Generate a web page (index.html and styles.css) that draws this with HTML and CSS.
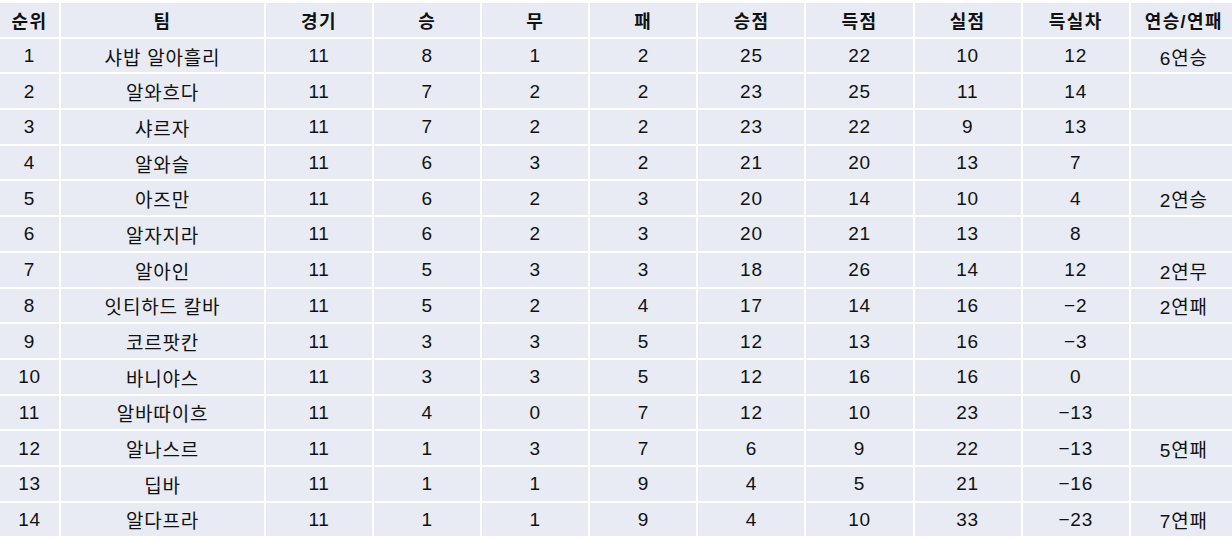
FILE: index.html
```html
<!DOCTYPE html>
<html lang="ko">
<head>
<meta charset="utf-8">
<title>순위표</title>
<link rel="stylesheet" href="styles.css">
</head>
<body>
<div class="standings">
  <div class="cell head">순위</div><div class="cell head">팀</div><div class="cell head">경기</div><div class="cell head">승</div><div class="cell head">무</div><div class="cell head">패</div><div class="cell head">승점</div><div class="cell head">득점</div><div class="cell head">실점</div><div class="cell head">득실차</div><div class="cell head">연승/연패</div>

  <div class="cell">1</div><div class="cell">샤밥 알아흘리</div><div class="cell">11</div><div class="cell">8</div><div class="cell">1</div><div class="cell">2</div><div class="cell">25</div><div class="cell">22</div><div class="cell">10</div><div class="cell">12</div><div class="cell">6연승</div>
  <div class="cell">2</div><div class="cell">알와흐다</div><div class="cell">11</div><div class="cell">7</div><div class="cell">2</div><div class="cell">2</div><div class="cell">23</div><div class="cell">25</div><div class="cell">11</div><div class="cell">14</div><div class="cell"></div>
  <div class="cell">3</div><div class="cell">샤르자</div><div class="cell">11</div><div class="cell">7</div><div class="cell">2</div><div class="cell">2</div><div class="cell">23</div><div class="cell">22</div><div class="cell">9</div><div class="cell">13</div><div class="cell"></div>
  <div class="cell">4</div><div class="cell">알와슬</div><div class="cell">11</div><div class="cell">6</div><div class="cell">3</div><div class="cell">2</div><div class="cell">21</div><div class="cell">20</div><div class="cell">13</div><div class="cell">7</div><div class="cell"></div>
  <div class="cell">5</div><div class="cell">아즈만</div><div class="cell">11</div><div class="cell">6</div><div class="cell">2</div><div class="cell">3</div><div class="cell">20</div><div class="cell">14</div><div class="cell">10</div><div class="cell">4</div><div class="cell">2연승</div>
  <div class="cell">6</div><div class="cell">알자지라</div><div class="cell">11</div><div class="cell">6</div><div class="cell">2</div><div class="cell">3</div><div class="cell">20</div><div class="cell">21</div><div class="cell">13</div><div class="cell">8</div><div class="cell"></div>
  <div class="cell">7</div><div class="cell">알아인</div><div class="cell">11</div><div class="cell">5</div><div class="cell">3</div><div class="cell">3</div><div class="cell">18</div><div class="cell">26</div><div class="cell">14</div><div class="cell">12</div><div class="cell">2연무</div>
  <div class="cell">8</div><div class="cell">잇티하드 칼바</div><div class="cell">11</div><div class="cell">5</div><div class="cell">2</div><div class="cell">4</div><div class="cell">17</div><div class="cell">14</div><div class="cell">16</div><div class="cell">−2</div><div class="cell">2연패</div>
  <div class="cell">9</div><div class="cell">코르팟칸</div><div class="cell">11</div><div class="cell">3</div><div class="cell">3</div><div class="cell">5</div><div class="cell">12</div><div class="cell">13</div><div class="cell">16</div><div class="cell">−3</div><div class="cell"></div>
  <div class="cell">10</div><div class="cell">바니야스</div><div class="cell">11</div><div class="cell">3</div><div class="cell">3</div><div class="cell">5</div><div class="cell">12</div><div class="cell">16</div><div class="cell">16</div><div class="cell">0</div><div class="cell"></div>
  <div class="cell">11</div><div class="cell">알바따이흐</div><div class="cell">11</div><div class="cell">4</div><div class="cell">0</div><div class="cell">7</div><div class="cell">12</div><div class="cell">10</div><div class="cell">23</div><div class="cell">−13</div><div class="cell"></div>
  <div class="cell">12</div><div class="cell">알나스르</div><div class="cell">11</div><div class="cell">1</div><div class="cell">3</div><div class="cell">7</div><div class="cell">6</div><div class="cell">9</div><div class="cell">22</div><div class="cell">−13</div><div class="cell">5연패</div>
  <div class="cell">13</div><div class="cell">딥바</div><div class="cell">11</div><div class="cell">1</div><div class="cell">1</div><div class="cell">9</div><div class="cell">4</div><div class="cell">5</div><div class="cell">21</div><div class="cell">−16</div><div class="cell"></div>
  <div class="cell">14</div><div class="cell">알다프라</div><div class="cell">11</div><div class="cell">1</div><div class="cell">1</div><div class="cell">9</div><div class="cell">4</div><div class="cell">10</div><div class="cell">33</div><div class="cell">−23</div><div class="cell">7연패</div>
</div>
</body>
</html>
```

FILE: styles.css
```css
html, body {
  margin: 0;
  padding: 0;
  background: #ffffff;
  overflow: hidden;
}

.standings {
  display: grid;
  grid-template-columns: 59px 203px repeat(9, 106.1px);
  grid-auto-rows: 33.7px;
  gap: 2px;
  padding-top: 3px;
  font-family: "Liberation Sans", "Noto Sans CJK KR", sans-serif;
  font-size: 19px;
  color: #111111;
}

.cell {
  background: #e8ebf4;
  display: flex;
  align-items: center;
  justify-content: center;
  padding-top: 1px;
  white-space: nowrap;
  letter-spacing: 0.8px;
}

.head {
  font-size: 18px;
  font-weight: bold;
  letter-spacing: 1.4px;
}
```
